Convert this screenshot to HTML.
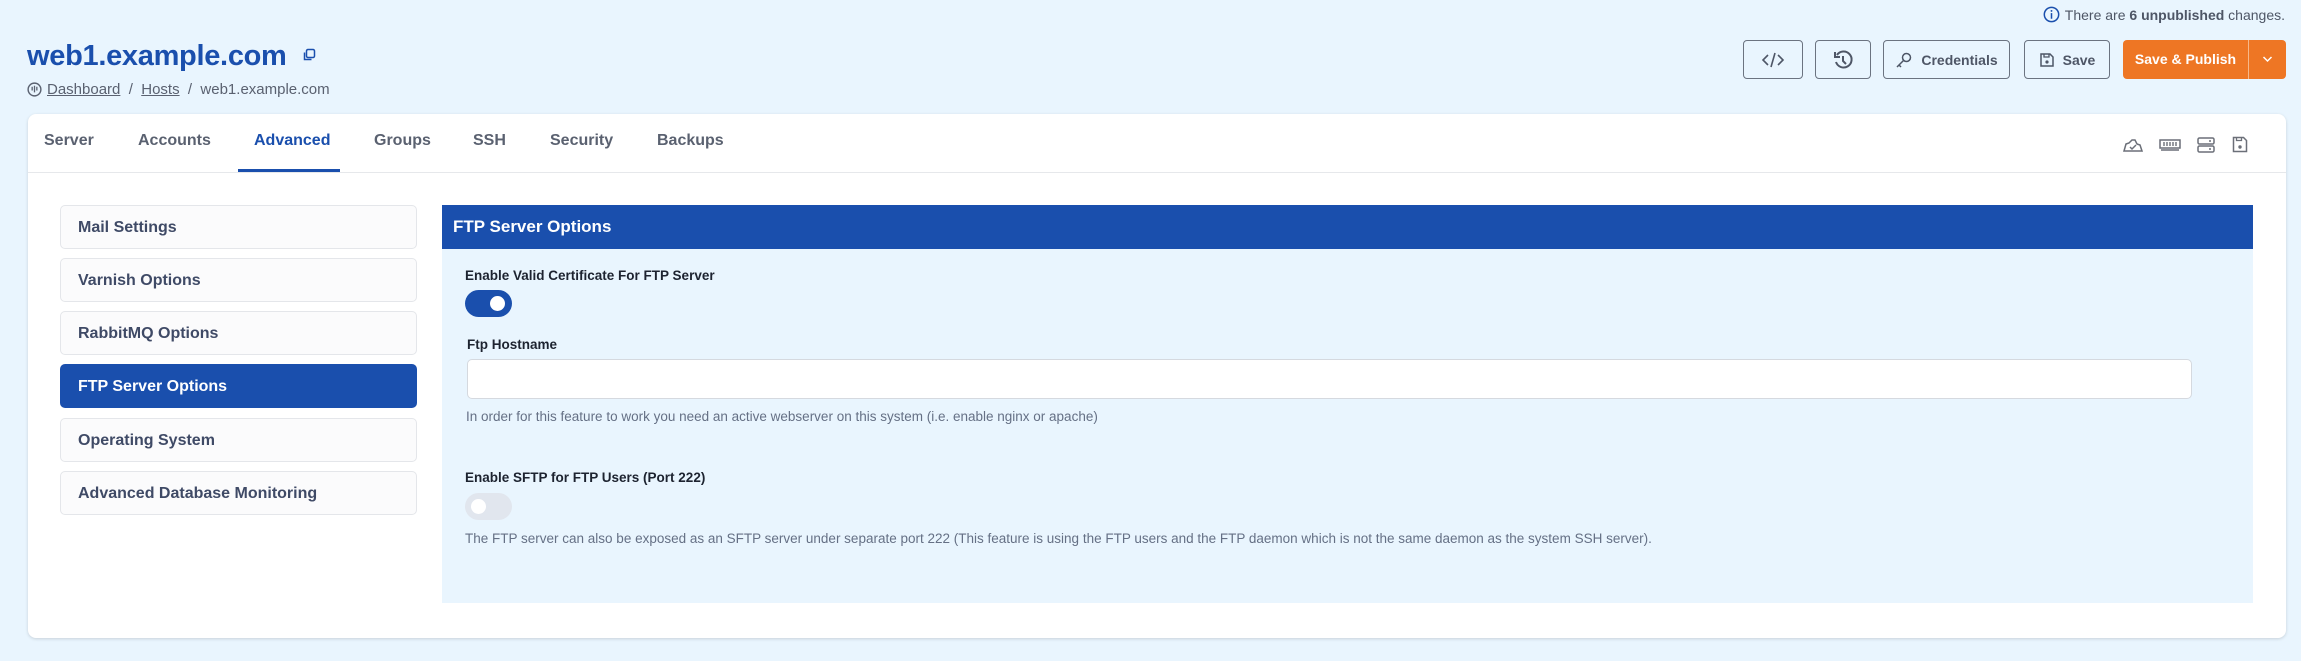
<!DOCTYPE html>
<html><head><meta charset="utf-8"><style>
*{box-sizing:border-box;margin:0;padding:0}
body{width:2301px;height:661px;background:#e9f5fe;font-family:"Liberation Sans",sans-serif;position:relative;overflow:hidden;color:#4a5363}
.a{position:absolute;white-space:nowrap}
.btn{position:absolute;top:40px;height:39px;border:1.5px solid #6b7380;border-radius:4px;display:flex;align-items:center;justify-content:center;font-size:14px;font-weight:bold;color:#4e5666;gap:8px}
.tab{position:absolute;top:132px;font-size:16px;font-weight:bold;color:#5a6170}
.side{position:absolute;left:60px;width:357px;height:44px;border:1.5px solid #e4e6ea;border-radius:5px;background:#fbfbfc;font-size:16px;font-weight:bold;color:#3f4a66;padding:13px 0 0 17px}
.lbl{position:absolute;font-size:13.5px;font-weight:bold;color:#1d2330}
.help{position:absolute;font-size:13.5px;color:#657085}
</style></head><body>
<div class="a" style="right:16px;top:6px;font-size:14px;color:#4e5666;display:flex;align-items:center;gap:5px"><svg width="17" height="17" viewBox="0 0 18 18"><circle cx="9" cy="9" r="7.6" fill="none" stroke="#1a4fad" stroke-width="1.6"/><rect x="8.2" y="7.5" width="1.6" height="6" fill="#1a4fad"/><circle cx="9" cy="5.2" r="1" fill="#1a4fad"/></svg><span>There are <b>6 unpublished</b> changes.</span></div>
<div class="a" style="left:27px;top:40px;font-size:29px;font-weight:bold;color:#1a4fad;letter-spacing:-0.3px">web1.example.com</div>
<svg class="a" style="left:302px;top:48px" width="14" height="14" viewBox="0 0 14 14"><rect x="4.5" y="1.5" width="8" height="8" rx="1.5" fill="none" stroke="#1a4fad" stroke-width="1.5"/><path d="M2.5 4.5v7h7" fill="none" stroke="#1a4fad" stroke-width="1.5"/></svg>
<div class="a" style="left:27px;top:81px;font-size:15px;color:#5a6170;display:flex;align-items:center;gap:5px"><svg width="15" height="15" viewBox="0 0 16 16"><circle cx="8" cy="8" r="6.8" fill="none" stroke="#5a6170" stroke-width="1.5"/><path d="M8 4v7M5.5 5v4M10.5 5v4" stroke="#5a6170" stroke-width="1.4"/></svg><span><u>Dashboard</u> &nbsp;/&nbsp; <u>Hosts</u> &nbsp;/&nbsp; web1.example.com</span></div>
<div class="btn" style="left:1743px;width:60px"><svg width="24" height="18" viewBox="0 0 24 18"><path d="M7 4 2 9l5 5M17 4l5 5-5 5M14 2l-4 14" fill="none" stroke="#4e5666" stroke-width="1.6"/></svg></div>
<div class="btn" style="left:1815px;width:56px"><svg width="22" height="22" viewBox="0 0 22 22"><path d="M5 6a8 8 0 1 1-1 7" fill="none" stroke="#4e5666" stroke-width="2"/><path d="M3 3v5h5" fill="none" stroke="#4e5666" stroke-width="2"/><path d="M11 7v5l3 3" fill="none" stroke="#4e5666" stroke-width="2"/></svg></div>
<div class="btn" style="left:1883px;width:127px"><svg width="18" height="18" viewBox="0 0 18 18"><circle cx="11.5" cy="6.5" r="4" fill="none" stroke="#4e5666" stroke-width="1.5"/><path d="M8.5 9.5 2 16M4 14l2 2" stroke="#4e5666" stroke-width="1.5" fill="none"/></svg>Credentials</div>
<div class="btn" style="left:2024px;width:86px"><svg width="16" height="16" viewBox="0 0 16 16"><path d="M2 2h9l3 3v9H2z" fill="none" stroke="#4e5666" stroke-width="1.5"/><path d="M5 2v3h5V2" fill="none" stroke="#4e5666" stroke-width="1.3"/><circle cx="8" cy="10" r="1.6" fill="#4e5666"/></svg>Save</div>
<div class="a" style="left:2123px;top:40px;width:163px;height:39px;background:#ee7624;border-radius:4px;color:#fff;font-size:14px;font-weight:bold">
<div class="a" style="left:0;width:125px;top:11px;text-align:center">Save &amp; Publish</div>
<div class="a" style="left:125px;top:0;width:1px;height:39px;background:#f7b88a"></div>
<svg class="a" style="left:139px;top:15px" width="11" height="8" viewBox="0 0 11 8"><path d="M1.5 2l4 4 4-4" fill="none" stroke="#fff" stroke-width="1.5"/></svg></div>
<div class="a" style="left:28px;top:114px;width:2258px;height:524px;background:#fff;border-radius:8px;box-shadow:0 1px 3px rgba(0,0,0,.15)"></div>
<div class="a" style="left:28px;top:172px;width:2258px;height:1px;background:#e6e8eb"></div>
<div class="tab" style="left:44px">Server</div>
<div class="tab" style="left:138px">Accounts</div>
<div class="tab" style="left:254px;color:#1a4fad">Advanced</div>
<div class="a" style="left:238px;top:169px;width:102px;height:3px;background:#1a4fad"></div>
<div class="tab" style="left:374px">Groups</div>
<div class="tab" style="left:473px">SSH</div>
<div class="tab" style="left:550px">Security</div>
<div class="tab" style="left:657px">Backups</div>
<svg class="a" style="left:2122px;top:137px" width="22" height="16" viewBox="0 0 22 16"><path d="M2 14h18l-2-6-3-1-2-4-3 0-3 3-3 1z" fill="none" stroke="#6b6f78" stroke-width="1.5"/><path d="M8 10l2 2 4-4" fill="none" stroke="#6b6f78" stroke-width="1.5"/></svg>
<svg class="a" style="left:2159px;top:138px" width="22" height="14" viewBox="0 0 22 14"><rect x="1" y="2" width="20" height="8" fill="none" stroke="#6b6f78" stroke-width="1.5"/><path d="M5 4v4M8 4v4M11 4v4M14 4v4M17 4v4M2 12h18" stroke="#6b6f78" stroke-width="1.4"/></svg>
<svg class="a" style="left:2197px;top:137px" width="18" height="16" viewBox="0 0 18 16"><rect x="1" y="1" width="16" height="6" rx="1.5" fill="none" stroke="#6b6f78" stroke-width="1.5"/><rect x="1" y="9" width="16" height="6" rx="1.5" fill="none" stroke="#6b6f78" stroke-width="1.5"/><path d="M12 4h2M12 12h2" stroke="#6b6f78" stroke-width="1.4"/></svg>
<svg class="a" style="left:2232px;top:136px" width="16" height="17" viewBox="0 0 16 17"><path d="M1.5 1.5h10l3 3v11h-13z" fill="none" stroke="#6b6f78" stroke-width="1.5"/><path d="M4.5 1.5v3h5v-3" fill="none" stroke="#6b6f78" stroke-width="1.3"/><circle cx="8" cy="11" r="1.7" fill="#6b6f78"/></svg>
<div class="side" style="top:205px">Mail Settings</div>
<div class="side" style="top:258px">Varnish Options</div>
<div class="side" style="top:311px">RabbitMQ Options</div>
<div class="side" style="top:364px;background:#1a4fad;border-color:#1a4fad;color:#fff">FTP Server Options</div>
<div class="side" style="top:418px">Operating System</div>
<div class="side" style="top:471px">Advanced Database Monitoring</div>
<div class="a" style="left:442px;top:205px;width:1811px;height:398px;background:#e9f5fe"></div>
<div class="a" style="left:442px;top:205px;width:1811px;height:44px;background:#1a4fad;color:#fff;font-size:17px;font-weight:bold;padding:12px 0 0 11px">FTP Server Options</div>
<div class="lbl" style="left:465px;top:268px">Enable Valid Certificate For FTP Server</div>
<div class="a" style="left:465px;top:290px;width:47px;height:27px;border-radius:14px;background:#1a4fad"><div class="a" style="left:25px;top:6px;width:15px;height:15px;border-radius:50%;background:#fff"></div></div>
<div class="lbl" style="left:467px;top:337px">Ftp Hostname</div>
<div class="a" style="left:467px;top:359px;width:1725px;height:40px;background:#fff;border:1.5px solid #d5d9df;border-radius:5px"></div>
<div class="help" style="left:466px;top:409px">In order for this feature to work you need an active webserver on this system (i.e. enable nginx or apache)</div>
<div class="lbl" style="left:465px;top:470px">Enable SFTP for FTP Users (Port 222)</div>
<div class="a" style="left:465px;top:493px;width:47px;height:27px;border-radius:14px;background:#e1e6ee"><div class="a" style="left:6px;top:6px;width:15px;height:15px;border-radius:50%;background:#fff"></div></div>
<div class="help" style="left:465px;top:531px">The FTP server can also be exposed as an SFTP server under separate port 222 (This feature is using the FTP users and the FTP daemon which is not the same daemon as the system SSH server).</div>
</body></html>
